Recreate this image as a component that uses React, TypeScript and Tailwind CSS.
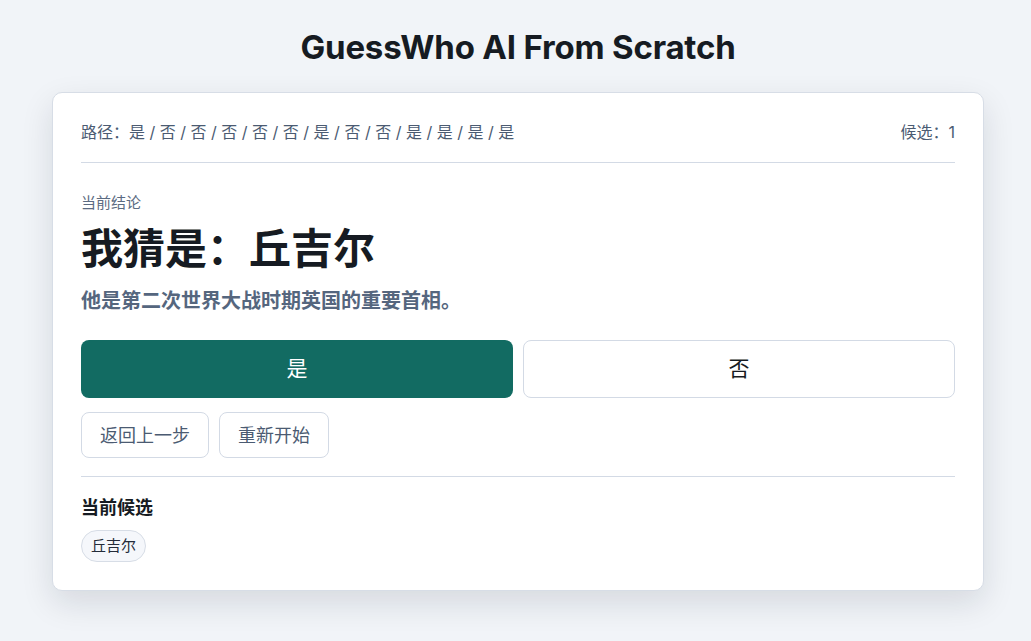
import { useState } from 'react';

const path = ['是', '否', '否', '否', '否', '否', '是', '否', '否', '是', '是', '是', '是'];

export default function App() {
  const [candidates] = useState(['丘吉尔']);

  return (
    <div
      className="min-h-screen bg-[#f1f4f8] pt-[27px] pb-10 pl-[5px]"
      style={{ fontFamily: 'Inter, "Noto Sans CJK SC", sans-serif' }}
    >
      <h1 className="text-center text-[33px] leading-[40px] font-bold text-[#161b22] tracking-[-0.2px]">
        GuessWho AI From Scratch
      </h1>

      <div className="mx-auto mt-[25px] w-[932px] rounded-[10px] border border-[#d7dde6] bg-white px-[28px] pt-[27px] pb-[28px] shadow-[0_12px_32px_rgba(15,23,42,0.12)]">
        {/* path + candidate count */}
        <div className="flex items-center justify-between border-b border-[#d3dae5] pb-[18px] text-[16px] leading-[24px] text-[#4b5b72]">
          <span>路径：{path.join(' / ')}</span>
          <span>候选：{candidates.length}</span>
        </div>

        <div className="pt-[30px]">
          <div className="text-[15px] leading-[20px] text-[#5b6b82]">当前结论</div>
          <h2 className="mt-[10px] text-[42px] leading-[52px] font-bold text-[#161b22]">我猜是：丘吉尔</h2>
          <p className="mt-[12px] text-[20px] leading-[28px] font-semibold text-[#55667e]">
            他是第二次世界大战时期英国的重要首相。
          </p>
        </div>

        <div className="mt-[25px] grid grid-cols-2 gap-[10px]">
          <button className="h-[58px] rounded-[8px] bg-[#126b62] text-[21px] text-white">是</button>
          <button className="h-[58px] rounded-[8px] border border-[#d3dae5] bg-white text-[21px] text-[#161b22]">否</button>
        </div>

        <div className="mt-[14px] flex gap-[10px]">
          <button className="h-[46px] rounded-[8px] border border-[#d3dae5] bg-white px-[18px] text-[18px] text-[#4b5b72]">
            返回上一步
          </button>
          <button className="h-[46px] rounded-[8px] border border-[#d3dae5] bg-white px-[18px] text-[18px] text-[#4b5b72]">
            重新开始
          </button>
        </div>

        <div className="mt-[18px] border-t border-[#d3dae5] pt-[18px]">
          <div className="text-[18px] leading-[26px] font-bold text-[#161b22]">当前候选</div>
          <div className="mt-[9px] flex flex-wrap gap-2">
            {candidates.map((c) => (
              <span
                key={c}
                className="rounded-full border border-[#d7dde6] bg-[#f5f7fb] px-[9px] py-[4px] text-[15px] leading-[22px] text-[#242c3a]"
              >
                {c}
              </span>
            ))}
          </div>
        </div>
      </div>
    </div>
  );
}
